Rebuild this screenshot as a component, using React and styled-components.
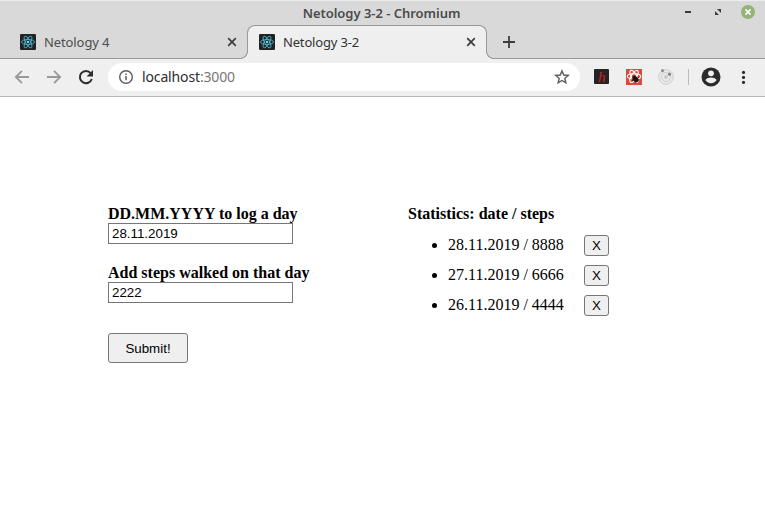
import React, { useState } from "react";
import styled, { createGlobalStyle, css } from "styled-components";

const GlobalStyle = createGlobalStyle`
  * { box-sizing: border-box; }
  body { margin: 0; background: #fff; overflow: hidden; }
`;

const Window = styled.div`
  width: 765px;
  height: 509px;
  display: flex;
  flex-direction: column;
  background: #fff;
  color: #000;
  font-family: "Noto Sans", "Open Sans", sans-serif;
`;

const TitleBar = styled.header`
  height: 25px;
  flex: none;
  display: grid;
  grid-template-columns: 1fr auto 1fr;
  align-items: center;
  padding: 0 10px;
  background: #d9d9d9;
  border-top: 1px solid #ececec;
`;

const WindowTitle = styled.h1`
  grid-column: 2;
  margin: 0 2px 1px 0;
  font-size: 13px;
  line-height: 18px;
  font-weight: 600;
  letter-spacing: -0.03px;
  color: #4b4b4b;
`;

const WindowControls = styled.div`
  display: flex;
  justify-content: flex-end;
  gap: 16px;
  padding-bottom: 2px;
  svg { display: block; }
`;

const TabStrip = styled.nav`
  height: 34px;
  flex: none;
  display: flex;
  background: #d9d9d9;
  border-bottom: 1px solid #999;
`;

const Tab = styled.div`
  position: relative;
  display: flex;
  align-items: center;
  width: ${(p) => p.$width}px;
  height: 34px;
  padding: ${(p) => (p.$active ? "0 9px 1px 11px" : "0 9px 0 20px")};
  font-size: 13px;
  color: ${(p) => (p.$active ? "#333" : "#4c4c4c")};
  svg { flex: none; display: block; }
  ${(p) =>
    p.$active &&
    css`
      background: #efefef;
      border: 1px solid #999;
      border-bottom: 0;
      border-radius: 8px 8px 0 0;
      &::before,
      &::after {
        content: "";
        position: absolute;
        bottom: 0;
        width: 8px;
        height: 8px;
      }
      &::before {
        left: -8px;
        background: radial-gradient(circle at 0 0, #d9d9d9 6.6px, #999 7.2px, #999 7.7px, #efefef 8.3px);
      }
      &::after {
        right: -8px;
        background: radial-gradient(circle at 100% 0, #d9d9d9 6.6px, #999 7.2px, #999 7.7px, #efefef 8.3px);
      }
    `}
`;

const TabLabel = styled.span`
  flex: 1;
  margin-left: 8px;
  line-height: 18px;
  letter-spacing: ${(p) => p.$spacing || 0}px;
`;

const NewTab = styled.div`
  display: flex;
  align-items: center;
  margin-left: 15px;
`;

const Toolbar = styled.div`
  height: 38px;
  flex: none;
  display: flex;
  align-items: center;
  padding: 0 14px 1px;
  background: #efefef;
  border-bottom: 1px solid #b8b8b8;
  svg { display: block; flex: none; }
`;

const NavButtons = styled.div`
  display: flex;
  gap: 16px;
  width: 94px;
`;

const AddressBar = styled.div`
  display: flex;
  align-items: center;
  width: 472px;
  height: 28px;
  padding: 0 10px;
  border-radius: 14px;
  background: #fff;
`;

const Address = styled.span`
  flex: 1;
  margin-left: 8px;
  font-size: 14px;
  line-height: 20px;
  letter-spacing: -0.14px;
  color: #2d2d2d;
`;

const Port = styled.span`
  color: #777;
`;

const Extensions = styled.div`
  display: flex;
  align-items: center;
  gap: 16px;
  margin-left: 13px;
`;

const Divider = styled.div`
  width: 1px;
  height: 16px;
  margin: 0 12px 0 14px;
  background: #bcbcbc;
`;

const MenuSlot = styled.div`
  margin-left: 14px;
`;

const Page = styled.main`
  flex: 1;
  display: flex;
  padding: 108px 0 0 108px;
  font: 16px/18px "Liberation Serif", "Times New Roman", serif;
`;

const LogForm = styled.form`
  width: 300px;
`;

const Field = styled.label`
  display: block;
  height: 59px;
  font-weight: 700;
`;

const TextInput = styled.input`
  display: block;
  width: 185px;
  height: 21px;
  padding: 1px 3px;
  border: 1px solid #767676;
  border-radius: 0;
  background: #fff;
  color: #000;
  font: 13.333px "Liberation Sans", Arial, sans-serif;
`;

const Button = styled.button`
  width: ${(p) => p.$width}px;
  height: ${(p) => p.$height}px;
  padding: 0;
  border: 1px solid #767676;
  border-radius: 3px;
  background: #efefef;
  color: #000;
  font: 13.333px "Liberation Sans", Arial, sans-serif;
`;

const SubmitRow = styled.div`
  padding-top: 10px;
`;

const Heading = styled.h2`
  margin: 0 0 7px;
  font-size: 16px;
  line-height: 18px;
`;

const StepList = styled.ul`
  margin: 0;
  padding-left: 40px;
`;

const StepItem = styled.li`
  height: 30px;
  line-height: 30px;
`;

const StepRow = styled.div`
  display: inline-flex;
  align-items: center;
  height: 30px;
  gap: 20px;
  vertical-align: top;
`;

const ReactFavicon = () => (
  <svg width="16" height="16" viewBox="0 0 16 16">
    <rect width="16" height="16" rx="1.2" fill="#222" />
    <g fill="none" stroke="#53b6d0" strokeWidth="0.85">
      <ellipse cx="8" cy="8" rx="2.5" ry="6.5" transform="rotate(90 8 8)" />
      <ellipse cx="8" cy="8" rx="6.5" ry="2.5" transform="rotate(60 8 8)" />
      <ellipse cx="8" cy="8" rx="6.5" ry="2.5" transform="rotate(120 8 8)" />
    </g>
    <circle cx="8" cy="8" r="1.3" fill="#61dafb" />
  </svg>
);

const CloseIcon = ({ color = "#3d3d3d" }) => (
  <svg width="12" height="12" viewBox="0 0 12 12">
    <path d="M2.2 2.2l7.6 7.6M9.8 2.2L2.2 9.8" stroke={color} strokeWidth="1.7" />
  </svg>
);

const MinimizeIcon = () => (
  <svg width="14" height="14" viewBox="0 0 14 14">
    <path d="M4 7h6" stroke="#3c3c3c" strokeWidth="2" />
  </svg>
);

const RestoreIcon = () => (
  <svg width="14" height="14" viewBox="0 0 14 14">
    <path d="M6 4h4v4zM4 6l4 4H4z" fill="#3c3c3c" />
  </svg>
);

const CloseWindowIcon = () => (
  <svg width="14" height="14" viewBox="0 0 14 14">
    <circle cx="7" cy="7" r="7" fill="#92b372" />
    <path d="M4.4 4.4l5.2 5.2M9.6 4.4L4.4 9.6" stroke="#fff" strokeWidth="1.8" />
  </svg>
);

const ArrowIcon = ({ flip }) => (
  <svg width="16" height="16" viewBox="0 0 16 16">
    <path
      d="M15 8H2.2M8 1.8L1.8 8L8 14.2"
      transform={flip ? "translate(16 0) scale(-1 1)" : undefined}
      fill="none"
      stroke="#999"
      strokeWidth="1.8"
    />
  </svg>
);

const ReloadIcon = () => (
  <svg width="16" height="16" viewBox="0 0 16 16">
    <path d="M13.8 10A6.1 6.1 0 1 1 12.7 4.2" fill="none" stroke="#2d2d2d" strokeWidth="2" />
    <path d="M15 1v6.4H8.6z" fill="#2d2d2d" />
  </svg>
);

const InfoIcon = () => (
  <svg width="16" height="16" viewBox="0 0 16 16">
    <circle cx="8" cy="8" r="6.3" fill="none" stroke="#5c5c5c" strokeWidth="1.4" />
    <path d="M8 7.1v4.2M8 4.4v1.6" stroke="#5c5c5c" strokeWidth="1.5" />
  </svg>
);

const StarIcon = () => (
  <svg width="16" height="16" viewBox="0 0 16 16">
    <path
      d="M8 1.9l1.75 4.15 4.5.38-3.42 2.95 1.03 4.4L8 11.45l-3.86 2.33 1.03-4.4-3.42-2.95 4.5-.38z"
      fill="none"
      stroke="#5c5c5c"
      strokeWidth="1.4"
    />
  </svg>
);

const ExtensionLetter = styled.text`
  font: italic 400 15px "Liberation Serif", serif;
`;

const HIcon = () => (
  <svg width="17" height="16" viewBox="0 0 17 16">
    <rect x="1" y="0" width="15" height="15" rx="1" fill="#242424" />
    <ExtensionLetter x="5" y="12.6" fill="#d0231d">h</ExtensionLetter>
  </svg>
);

const ReactDevtoolsIcon = () => (
  <svg width="16" height="16" viewBox="0 0 16 16">
    <rect width="16" height="16" fill="#da4a3d" />
    <g fill="none" stroke="#fff" strokeWidth="1.1">
      <ellipse cx="8" cy="7.4" rx="6.7" ry="2.7" />
      <ellipse cx="8" cy="7.4" rx="6.7" ry="2.7" transform="rotate(60 8 7.4)" />
      <ellipse cx="8" cy="7.4" rx="6.7" ry="2.7" transform="rotate(120 8 7.4)" />
    </g>
    <ellipse cx="9.4" cy="10" rx="2.5" ry="3.6" fill="#241313" transform="rotate(-40 9.4 10)" />
    <path d="M5.8 9.8l4.6 4.4M12.8 8l-3.8 5.6M8 6.8l5 4.6M6 11.9l5.8-4" stroke="#241313" strokeWidth="0.8" />
  </svg>
);

const OrbitIcon = () => (
  <svg width="16" height="16" viewBox="0 0 16 16">
    <circle cx="8" cy="8" r="7.3" fill="#e9e9e9" stroke="#cecece" strokeWidth="1" />
    <circle cx="8" cy="8" r="4.5" fill="none" stroke="#cfcfcf" strokeWidth="1" />
    <circle cx="8" cy="8" r="2" fill="#cbcbcb" />
    <circle cx="4.5" cy="1.7" r="1.6" fill="#929292" />
    <circle cx="11.5" cy="5.2" r="1.6" fill="#858585" />
  </svg>
);

const ProfileIcon = () => (
  <svg width="20" height="20" viewBox="0 0 20 20">
    <circle cx="10" cy="10" r="9.5" fill="#2b2b2b" />
    <circle cx="10" cy="6.3" r="2.9" fill="#efefef" />
    <path d="M4.3 13.1c1.1-1.9 3.7-2.6 5.7-2.6s4.6.7 5.7 2.6A6.9 6.9 0 0 1 10 16.2a6.9 6.9 0 0 1-5.7-3.1z" fill="#efefef" />
  </svg>
);

const MenuIcon = () => (
  <svg width="16" height="16" viewBox="0 0 16 16" fill="#2d2d2d">
    <circle cx="8.5" cy="3.4" r="1.6" />
    <circle cx="8.5" cy="8.4" r="1.6" />
    <circle cx="8.5" cy="13.4" r="1.6" />
  </svg>
);

const PlusIcon = () => (
  <svg width="14" height="14" viewBox="0 0 14 14">
    <path d="M7 1v12M1 7h12" stroke="#3c3c3c" strokeWidth="1.8" />
  </svg>
);

const initialEntries = [
  { date: "28.11.2019", steps: 8888 },
  { date: "27.11.2019", steps: 6666 },
  { date: "26.11.2019", steps: 4444 },
];

export default function App() {
  const [entries, setEntries] = useState(initialEntries);
  const [date, setDate] = useState("28.11.2019");
  const [steps, setSteps] = useState("2222");

  const submit = (event) => {
    event.preventDefault();
    setEntries([{ date, steps }, ...entries]);
  };

  return (
    <Window>
      <GlobalStyle />
      <TitleBar>
        <WindowTitle>Netology 3-2 - Chromium</WindowTitle>
        <WindowControls>
          <MinimizeIcon />
          <RestoreIcon />
          <CloseWindowIcon />
        </WindowControls>
      </TitleBar>
      <TabStrip>
        <Tab $width={247}>
          <ReactFavicon />
          <TabLabel $spacing={-0.1}>Netology 4</TabLabel>
          <CloseIcon />
        </Tab>
        <Tab $width={240} $active>
          <ReactFavicon />
          <TabLabel $spacing={-0.17}>Netology 3-2</TabLabel>
          <CloseIcon />
        </Tab>
        <NewTab>
          <PlusIcon />
        </NewTab>
      </TabStrip>
      <Toolbar>
        <NavButtons>
          <ArrowIcon />
          <ArrowIcon flip />
          <ReloadIcon />
        </NavButtons>
        <AddressBar>
          <InfoIcon />
          <Address>
            localhost<Port>:3000</Port>
          </Address>
          <StarIcon />
        </AddressBar>
        <Extensions>
          <HIcon />
          <ReactDevtoolsIcon />
          <OrbitIcon />
        </Extensions>
        <Divider />
        <ProfileIcon />
        <MenuSlot>
          <MenuIcon />
        </MenuSlot>
      </Toolbar>
      <Page>
        <LogForm onSubmit={submit}>
          <Field>
            DD.MM.YYYY to log a day
            <TextInput value={date} onChange={(e) => setDate(e.target.value)} />
          </Field>
          <Field>
            Add steps walked on that day
            <TextInput value={steps} onChange={(e) => setSteps(e.target.value)} />
          </Field>
          <SubmitRow>
            <Button $width={80} $height={30}>Submit!</Button>
          </SubmitRow>
        </LogForm>
        <section>
          <Heading>Statistics: date / steps</Heading>
          <StepList>
            {entries.map((entry, index) => (
              <StepItem key={index}>
                <StepRow>
                  {entry.date} / {entry.steps}
                  <Button
                    $width={25}
                    $height={21}
                    onClick={() => setEntries(entries.filter((_, i) => i !== index))}
                  >
                    X
                  </Button>
                </StepRow>
              </StepItem>
            ))}
          </StepList>
        </section>
      </Page>
    </Window>
  );
}
